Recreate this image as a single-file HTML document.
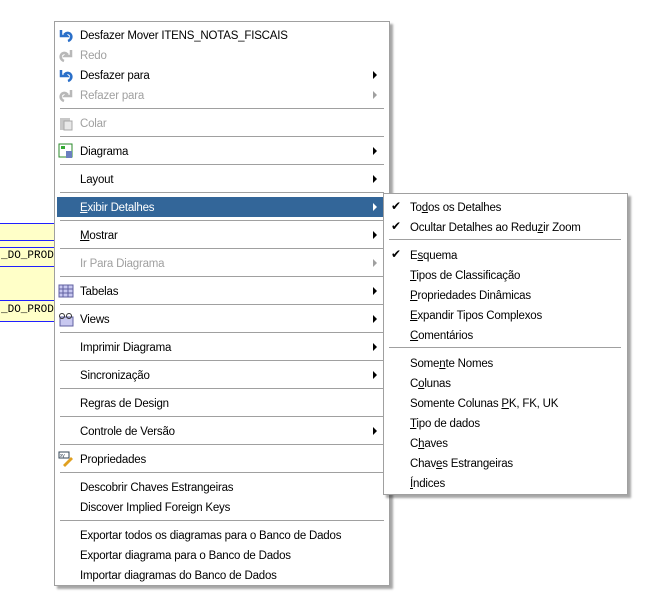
<!DOCTYPE html>
<html><head><meta charset="utf-8"><style>
body{margin:0;width:647px;height:611px;background:#fff;position:relative;overflow:hidden;font-family:"Liberation Sans","DejaVu Sans",sans-serif;font-size:11.5px;letter-spacing:-0.2px;}
.bg{position:absolute;left:0;top:223px;width:54px;height:98px;background:#ffffc8;}
.bl{position:absolute;left:0;width:54px;height:1px;background:#2020ff;}
.bt{position:absolute;left:1px;font-family:"Liberation Mono",monospace;font-size:11px;letter-spacing:0;color:#000;white-space:nowrap;width:53px;overflow:hidden;}
.menu{position:absolute;background:#fff;border:1px solid #a0a0a0;box-shadow:3px 3px 2px rgba(0,0,0,0.35);}
.it{position:absolute;height:20px;line-height:20px;margin-top:1px;color:#000;white-space:nowrap;}
.dis{color:#a0a0a0;}
.sep{position:absolute;height:1px;background:#a0a0a0;}
.arr{position:absolute;width:0;height:0;border-top:4px solid transparent;border-bottom:4px solid transparent;border-left:4px solid #000;}
.arr.d{border-left-color:#a0a0a0;}
.hl{position:absolute;background:#336699;}
u{text-decoration:underline;}
.ck{position:absolute;font-size:12px;}
</style></head><body>
<div class="bg"></div>
<div class="bl" style="top:223px"></div><div class="bl" style="top:240px"></div>
<div class="bl" style="top:247px"></div><div class="bl" style="top:266px"></div>
<div class="bl" style="top:300px"></div><div class="bl" style="top:321px"></div>
<div class="bt" style="top:250px">_DO_PROD</div>
<div class="bt" style="top:304px">_DO_PROD</div>

<div class="menu" style="left:54px;top:21px;width:334px;height:563px;"></div>
<div class="hl" style="left:57px;top:197px;width:328px;height:20px;"></div>

<svg style="position:absolute;left:58px;top:27px" width="16" height="16"><path d="M3 3v6h6L7 7c2-2 5-1 6 1s0 5-3 6" fill="none" stroke="#2a6fc9" stroke-width="2.5"/></svg>
<svg style="position:absolute;left:58px;top:47px" width="16" height="16"><path d="M13 3v6H7l2-2c-2-2-5-1-6 1s0 5 3 6" fill="none" stroke="#b8b8b8" stroke-width="2.5"/></svg>
<svg style="position:absolute;left:58px;top:67px" width="16" height="16"><path d="M3 3v6h6L7 7c2-2 5-1 6 1s0 5-3 6" fill="none" stroke="#2a6fc9" stroke-width="2.5"/></svg>
<svg style="position:absolute;left:58px;top:87px" width="16" height="16"><path d="M13 3v6H7l2-2c-2-2-5-1-6 1s0 5 3 6" fill="none" stroke="#b8b8b8" stroke-width="2.5"/></svg>
<svg style="position:absolute;left:58px;top:115px" width="16" height="16"><rect x="2" y="3" width="10" height="12" fill="#c8c8c8"/><rect x="6" y="6" width="8" height="9" fill="#e8e8e8" stroke="#a8a8a8"/></svg>
<svg style="position:absolute;left:58px;top:143px" width="16" height="16"><rect x="1" y="1" width="13" height="13" fill="#fff" stroke="#2a8a2a"/><rect x="3" y="3" width="4" height="3" fill="#3a3"/><rect x="8" y="8" width="6" height="7" fill="#6a7fc0"/></svg>
<svg style="position:absolute;left:58px;top:283px" width="16" height="16"><rect x="1" y="2" width="14" height="12" fill="#c8c8f0" stroke="#6060a0"/><path d="M1 6h14M1 10h14M5 2v12M10 2v12" stroke="#6060a0"/></svg>
<svg style="position:absolute;left:58px;top:311px" width="16" height="16"><rect x="2" y="6" width="13" height="9" fill="#c8c8f0" stroke="#6060a0"/><circle cx="4" cy="5" r="2.5" fill="none" stroke="#333"/><circle cx="11" cy="5" r="2.5" fill="none" stroke="#333"/></svg>
<svg style="position:absolute;left:58px;top:451px" width="16" height="16"><rect x="1" y="1" width="10" height="6" fill="#fff" stroke="#345"/><text x="2" y="6" font-size="5" fill="#345">xy</text><path d="M5 14l8-8 2 2-8 8z" fill="#e0a020"/></svg>

<div class="it" style="left:80px;top:25px">Desfazer Mover ITENS_NOTAS_FISCAIS</div>
<div class="it dis" style="left:80px;top:45px">Redo</div>
<div class="it" style="left:80px;top:65px">Desfazer para</div><div class="arr" style="left:373px;top:71px"></div>
<div class="it dis" style="left:80px;top:85px">Refazer para</div><div class="arr d" style="left:373px;top:91px"></div>
<div class="sep" style="left:60px;top:108px;width:324px"></div>
<div class="it dis" style="left:80px;top:113px">Colar</div>
<div class="sep" style="left:60px;top:136px;width:324px"></div>
<div class="it" style="left:80px;top:141px">Diagrama</div><div class="arr" style="left:373px;top:147px"></div>
<div class="sep" style="left:60px;top:164px;width:324px"></div>
<div class="it" style="left:80px;top:169px">Layout</div><div class="arr" style="left:373px;top:175px"></div>
<div class="sep" style="left:60px;top:192px;width:324px"></div>
<div class="it" style="left:80px;top:197px;color:#fff"><u>E</u>xibir Detalhes</div><div class="arr" style="left:373px;top:203px;border-left-color:#fff"></div>
<div class="sep" style="left:60px;top:220px;width:324px"></div>
<div class="it" style="left:80px;top:225px"><u>M</u>ostrar</div><div class="arr" style="left:373px;top:231px"></div>
<div class="sep" style="left:60px;top:248px;width:324px"></div>
<div class="it dis" style="left:80px;top:253px">Ir Para Diagrama</div><div class="arr d" style="left:373px;top:259px"></div>
<div class="sep" style="left:60px;top:276px;width:324px"></div>
<div class="it" style="left:80px;top:281px">Tabelas</div><div class="arr" style="left:373px;top:287px"></div>
<div class="sep" style="left:60px;top:304px;width:324px"></div>
<div class="it" style="left:80px;top:309px">Views</div><div class="arr" style="left:373px;top:315px"></div>
<div class="sep" style="left:60px;top:332px;width:324px"></div>
<div class="it" style="left:80px;top:337px">Imprimir Diagrama</div><div class="arr" style="left:373px;top:343px"></div>
<div class="sep" style="left:60px;top:360px;width:324px"></div>
<div class="it" style="left:80px;top:365px">Sincronização</div><div class="arr" style="left:373px;top:371px"></div>
<div class="sep" style="left:60px;top:388px;width:324px"></div>
<div class="it" style="left:80px;top:393px">Regras de Design</div>
<div class="sep" style="left:60px;top:416px;width:324px"></div>
<div class="it" style="left:80px;top:421px">Controle de Versão</div><div class="arr" style="left:373px;top:427px"></div>
<div class="sep" style="left:60px;top:444px;width:324px"></div>
<div class="it" style="left:80px;top:449px">Propriedades</div>
<div class="sep" style="left:60px;top:472px;width:324px"></div>
<div class="it" style="left:80px;top:477px">Descobrir Chaves Estrangeiras</div>
<div class="it" style="left:80px;top:497px">Discover Implied Foreign Keys</div>
<div class="sep" style="left:60px;top:520px;width:324px"></div>
<div class="it" style="left:80px;top:525px">Exportar todos os diagramas para o Banco de Dados</div>
<div class="it" style="left:80px;top:545px">Exportar diagrama para o Banco de Dados</div>
<div class="it" style="left:80px;top:565px">Importar diagramas do Banco de Dados</div>

<div class="menu" style="left:383px;top:193px;width:243px;height:300px;"></div>
<div class="ck" style="left:391px;top:199px">✔</div>
<div class="it" style="left:410px;top:197px">To<u>d</u>os os Detalhes</div>
<div class="ck" style="left:391px;top:219px">✔</div>
<div class="it" style="left:410px;top:217px">Ocultar Detalhes ao Redu<u>z</u>ir Zoom</div>
<div class="sep" style="left:389px;top:239px;width:232px"></div>
<div class="ck" style="left:391px;top:247px">✔</div>
<div class="it" style="left:410px;top:245px">E<u>s</u>quema</div>
<div class="it" style="left:410px;top:265px"><u>T</u>ipos de Classificação</div>
<div class="it" style="left:410px;top:285px"><u>P</u>ropriedades Dinâmicas</div>
<div class="it" style="left:410px;top:305px"><u>E</u>xpandir Tipos Complexos</div>
<div class="it" style="left:410px;top:325px"><u>C</u>omentários</div>
<div class="sep" style="left:389px;top:347px;width:232px"></div>
<div class="it" style="left:410px;top:353px">Some<u>n</u>te Nomes</div>
<div class="it" style="left:410px;top:373px">C<u>o</u>lunas</div>
<div class="it" style="left:410px;top:393px">Somente Colunas <u>P</u>K, FK, UK</div>
<div class="it" style="left:410px;top:413px"><u>T</u>ipo de dados</div>
<div class="it" style="left:410px;top:433px">C<u>h</u>aves</div>
<div class="it" style="left:410px;top:453px">Chav<u>e</u>s Estrangeiras</div>
<div class="it" style="left:410px;top:473px"><u>Í</u>ndices</div>
</body></html>
